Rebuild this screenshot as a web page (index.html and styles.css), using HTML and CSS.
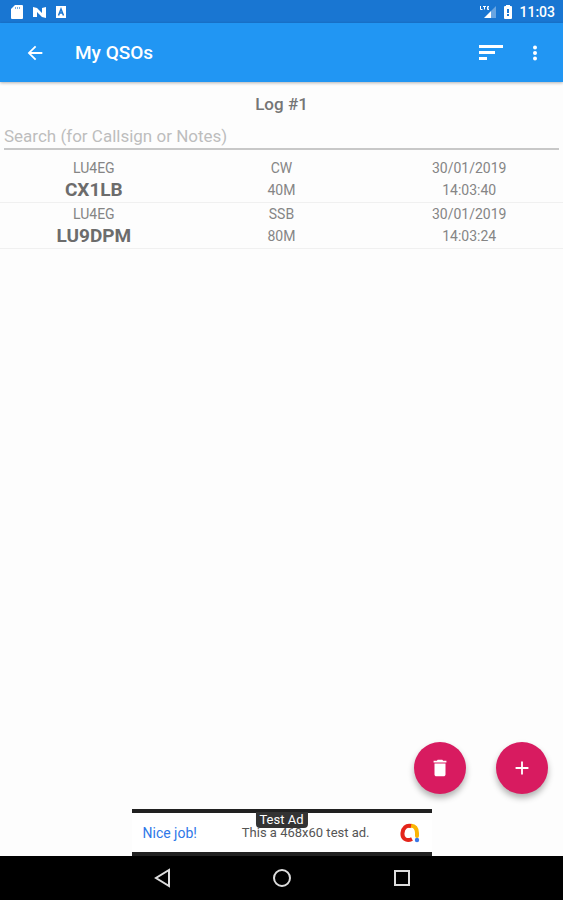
FILE: index.html
```html
<!DOCTYPE html>
<html lang="en">
<head>
    <meta charset="UTF-8">
    <meta name="viewport" content="width=device-width, initial-scale=1.0">
    <title>My QSOs</title>
    <link rel="stylesheet" href="styles.css">
</head>
<body>

<div class="status-bar">
    <div class="status-left">
        <svg width="14" height="16" viewBox="0 0 14 16"><path fill="#fff" d="M5 1h7a1 1 0 0 1 1 1v12a1 1 0 0 1-1 1H2a1 1 0 0 1-1-1V5z"/><path stroke="#1976d2" stroke-opacity=".6" d="M5.500 3v2M7.500 3v2M9.500 3v2"/></svg>
        <svg width="15" height="16" viewBox="0 0 15 16"><path fill="#fff" d="M1 13V3l4 1 5 5V4l4-1v11l-4-1-5-5v5z"/></svg>
        <svg width="12" height="16" viewBox="0 0 12 16"><path fill="#fff" d="M1 2h10v12H1z"/><path fill="none" stroke="#1976d2" stroke-width="1.500" d="M3.500 11.500 6 5l2.500 6.500M4 9h4"/></svg>
    </div>
    <div class="status-right">
        <svg width="18" height="16" viewBox="0 0 18 16"><path fill="none" stroke="#fff" d="M1.500 2v3.500h2M4 2.500h3M5.500 2.500v3M10 2.500H8.500v3H10M8.500 4H10"/><path fill="#fff" d="M5 14 12 7v7z"/><path fill="#fff" opacity=".35" d="m12 7 5-5v12h-5z"/></svg>
        <svg width="10" height="16" viewBox="0 0 10 16"><path fill="#fff" d="M3 1h4v1h1a1 1 0 0 1 1 1v11a1 1 0 0 1-1 1H2a1 1 0 0 1-1-1V3a1 1 0 0 1 1-1h1z"/><path stroke="#1976d2" stroke-width="2" d="M5 5v4M5 10v2"/></svg>
        <span>11:03</span>
    </div>
</div>

<header class="app-bar">
    <button class="icon-button" aria-label="Back">
        <svg width="22" height="22" viewBox="0 0 24 24"><path fill="#fff" d="M20 11H7.800l5.600-5.600L12 4l-8 8 8 8 1.400-1.400L7.800 13H20z"/></svg>
    </button>
    <h1>My QSOs</h1>
    <button class="icon-button" aria-label="Sort">
        <svg width="24" height="18" viewBox="0 0 24 18"><path fill="#fff" d="M0 1h24v3H0zM0 7h16v3H0zM0 13h8v3H0z"/></svg>
    </button>
    <button class="icon-button" aria-label="More options">
        <svg width="20" height="20" viewBox="0 0 20 20"><g fill="#fff"><circle cx="10" cy="4.500" r="2"/><circle cx="10" cy="10" r="2"/><circle cx="10" cy="15.500" r="2"/></g></svg>
    </button>
</header>

<main class="content">
    <h2>Log #1</h2>
    <input class="search" type="text" aria-label="Search" placeholder="Search (for Callsign or Notes)">
    <table class="log">
        <tbody>
            <tr>
                <td><div>LU4EG</div><div class="callsign">CX1LB</div></td>
                <td><div>CW</div><div>40M</div></td>
                <td><div>30/01/2019</div><div>14:03:40</div></td>
            </tr>
            <tr>
                <td><div>LU4EG</div><div class="callsign">LU9DPM</div></td>
                <td><div>SSB</div><div>80M</div></td>
                <td><div>30/01/2019</div><div>14:03:24</div></td>
            </tr>
        </tbody>
    </table>
    <div class="actions">
        <button class="fab" aria-label="Delete">
            <svg width="22" height="22" viewBox="0 0 24 24"><path fill="#fff" d="M6 19c0 1.100.9 2 2 2h8c1.100 0 2-.9 2-2V7H6zM19 4h-3.500l-1-1h-5l-1 1H5v2h14z"/></svg>
        </button>
        <button class="fab" aria-label="Add">
            <svg width="22" height="22" viewBox="0 0 24 24"><path stroke="#fff" stroke-width="2" d="M12 5v14M5 12h14"/></svg>
        </button>
    </div>
</main>

<div class="ad">
    <a href="#">Nice job!</a>
    <span class="ad-text">This a 468x60 test ad.</span>
    <svg width="20" height="20" viewBox="0 0 20 20" fill="none" stroke-width="4">
        <path stroke="#fbb404" stroke-linecap="round" d="M10 3c5-1 7 3 7 7v3"/>
        <path stroke="#e4251b" d="M12 16C6 19 2 15 2.500 10 3 5 6 2 11 3"/>
        <circle cx="17" cy="17" r="2.200" fill="#3b78e7"/>
    </svg>
    <span class="ad-label">Test Ad</span>
</div>

<nav class="nav-bar">
    <button aria-label="Back"><svg width="20" height="20" viewBox="0 0 20 20"><path d="M17 2v16L4 10z"/></svg></button>
    <button aria-label="Home"><svg width="20" height="20" viewBox="0 0 20 20"><circle cx="10" cy="10" r="8"/></svg></button>
    <button aria-label="Recent apps"><svg width="20" height="20" viewBox="0 0 20 20"><path d="M3 3h14v14H3z"/></svg></button>
</nav>

</body>
</html>
```
FILE: styles.css
```css
* {
    box-sizing: border-box;
}

body {
    margin: 0;
    min-height: 100vh;
    display: flex;
    flex-direction: column;
    font-family: Roboto, sans-serif;
    font-size: 14px;
    color: #757575;
    background-color: #fdfdfd;
}

h1, h2 {
    margin: 0;
    font-weight: 500;
}

button {
    display: flex;
    justify-content: center;
    align-items: center;
    padding: 0;
    border: none;
    background: none;
    cursor: pointer;
}

svg {
    display: block;
}

.status-bar {
    display: flex;
    justify-content: space-between;
    align-items: center;
    height: 23px;
    padding: 0 8px 0 10px;
    color: white;
    background-color: #1976d2;
}

.status-left {
    display: flex;
    gap: 8px;
}

.status-right {
    display: flex;
    align-items: center;
    gap: 6px;
    font-weight: 500;
}

.app-bar {
    display: flex;
    align-items: center;
    height: 59px;
    padding: 0 6px 0 13px;
    color: white;
    background-color: #2196f3;
    box-shadow: 0 1px 3px rgba(0, 0, 0, 0.3);
}

.app-bar h1 {
    flex: 1;
    padding-left: 18px;
    font-size: 19px;
}

.icon-button {
    width: 44px;
    height: 44px;
}

.content {
    flex: 1;
    display: flex;
    flex-direction: column;
    padding-top: 10px;
}

.content h2 {
    font-size: 17px;
    line-height: 24px;
    text-align: center;
}

.search {
    height: 34px;
    margin: 0 4px;
    padding: 8px 0 0;
    border: none;
    border-bottom: 2px solid #c8c8c8;
    outline: none;
    font-family: inherit;
    font-size: 17px;
    color: #616161;
    background: none;
}

.search::placeholder {
    color: #bdbdbd;
}

.log {
    width: 100%;
    margin-top: 7px;
    border-collapse: collapse;
    table-layout: fixed;
    text-align: center;
    line-height: 22px;
    color: #858585;
}

.log td {
    padding: 0 0 1px;
    border-bottom: 1px solid #f0f0f0;
}

.log .callsign {
    font-size: 19px;
    font-weight: bold;
    color: #6c6c6c;
}

.actions {
    display: flex;
    justify-content: flex-end;
    gap: 30px;
    margin-top: auto;
    padding: 15px;
}

.fab {
    width: 52px;
    height: 52px;
    border-radius: 50%;
    background-color: #d81b60;
    box-shadow: 0 4px 6px rgba(0, 0, 0, 0.3);
}

.ad {
    position: relative;
    align-self: center;
    display: flex;
    justify-content: space-between;
    align-items: center;
    width: 300px;
    height: 47px;
    padding: 0 11px;
    border-top: 4px solid #212121;
    border-bottom: 4px solid #212121;
    font-size: 13px;
    background-color: white;
}

.ad a {
    font-size: 14px;
    color: #2f78e8;
    text-decoration: none;
}

.ad-text {
    padding-left: 14px;
    color: #555;
}

.ad-label {
    position: absolute;
    top: -1px;
    left: 50%;
    transform: translateX(-50%);
    padding: 0 4px;
    border-radius: 0 0 4px 4px;
    font-size: 13px;
    line-height: 16px;
    white-space: nowrap;
    color: white;
    background-color: #333;
}

.nav-bar {
    display: flex;
    justify-content: center;
    height: 44px;
    background-color: black;
}

.nav-bar button {
    width: 120px;
}

.nav-bar svg {
    fill: none;
    stroke: #ddd;
    stroke-width: 2;
}
```
